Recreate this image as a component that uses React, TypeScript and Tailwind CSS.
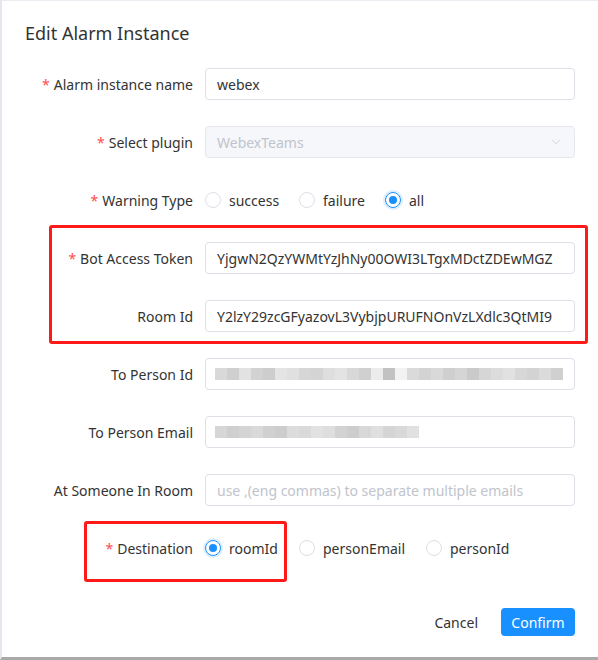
import { ChevronDown } from "lucide-react";

const font = { fontFamily: '"Noto Sans", "Liberation Sans", sans-serif' };

function Label({ text, required }: { text: string; required?: boolean }) {
  return (
    <div className="w-[193px] shrink-0 text-right text-[14px] text-[#333333] pr-0">
      {required && <span className="text-[#ff4d4f] mr-[4px]">*</span>}
      {text}
    </div>
  );
}

function Row({ children }: { children: React.ReactNode }) {
  return <div className="flex items-center h-[32px] gap-[12px]">{children}</div>;
}

function TextBox({ value, placeholder }: { value?: string; placeholder?: string }) {
  return (
    <div className="w-[370px] h-[32px] border border-[#dcdfe6] rounded-[4px] bg-white flex items-center px-[11px] overflow-hidden whitespace-nowrap text-[14px]">
      {value ? <span className="text-[#333333]">{value}</span> : <span className="text-[#c0c4cc]">{placeholder}</span>}
    </div>
  );
}

const idBlocks = ["#d9d9d9", "#cfcfcf", "#e2e2e2", "#d2d2d2", "#cdcdcd", "#e4e4e4", "#e0e0e0", "#d6d6d6", "#d4d4d4", "#dedede", "#e3e3e3", "#d8d8d8", "#d0d0d0", "#ececec", "#c2c2c2", "#f2f2f2", "#dadada", "#d3d3d3", "#d9d9d9", "#cfcfcf", "#d5d5d5", "#cacaca", "#d6d6d6", "#dcdcdc", "#e1e1e1", "#d7d7d7", "#d3d3d3", "#dbdbdb", "#d0d0d0"];
const emailBlocks = ["#d6d6d6", "#cfcfcf", "#d4d4d4", "#dadada", "#d0d0d0", "#cdcdcd", "#dcdcdc", "#d9d9d9", "#e2e2e2", "#dedede", "#d3d3d3", "#cdcdcd", "#d8d8d8", "#dfdfdf", "#d5d5d5", "#d9d9d9", "#e1e1e1"];

function Blurred({ blocks }: { blocks: string[] }) {
  return (
    <div className="w-[370px] h-[32px] border border-[#dcdfe6] rounded-[4px] bg-white flex items-center px-[9px]">
      <div className="flex h-[12px]">
        {blocks.map((c, i) => (
          <div key={i} className="w-[12px] h-[12px]" style={{ background: c }} />
        ))}
      </div>
    </div>
  );
}

function Radio({ label, checked, w }: { label: string; checked?: boolean; w: string }) {
  return (
    <div className={`flex items-center text-[14px] text-[#333333] ${w}`}>
      {checked ? (
        <span className="w-[16px] h-[16px] rounded-full border border-[#1890ff] flex items-center justify-center shadow-[0_0_0_2px_rgba(24,144,255,0.15)]">
          <span className="w-[8px] h-[8px] rounded-full bg-[#1890ff]" />
        </span>
      ) : (
        <span className="w-[16px] h-[16px] rounded-full border border-[#dcdfe6] bg-white" />
      )}
      <span className="ml-[8px]">{label}</span>
    </div>
  );
}

export default function App() {
  return (
    <div style={font} className="relative w-[598px] h-[660px] bg-white border-l-2 border-t border-l-[#e6e6ee] border-t-[#ececf2] border-b-[3px] border-b-[#a9a9a9] box-border overflow-hidden">
      <div className="pt-[19px] pl-[23px] text-[18px] leading-[26px] text-[#333333]">Edit Alarm Instance</div>
      <div className="mt-[22px] flex flex-col gap-[26px] -ml-[2px]">
        <Row>
          <Label text="Alarm instance name" required />
          <TextBox value="webex" />
        </Row>
        <Row>
          <Label text="Select plugin" required />
          <div className="w-[370px] h-[32px] border border-[#e4e7ed] rounded-[4px] bg-[#f5f7fa] flex items-center justify-between px-[11px] text-[14px] text-[#c0c4cc]">
            <span>WebexTeams</span>
            <ChevronDown size={14} strokeWidth={1.2} className="text-[#c0c4cc]" />
          </div>
        </Row>
        <Row>
          <Label text="Warning Type" required />
          <div className="flex items-center">
            <Radio label="success" w="w-[94px]" />
            <Radio label="failure" w="w-[86px]" />
            <Radio label="all" checked w="w-[60px]" />
          </div>
        </Row>
        <Row>
          <Label text="Bot Access Token" required />
          <TextBox value="YjgwN2QzYWMtYzJhNy00OWI3LTgxMDctZDEwMGZ" />
        </Row>
        <Row>
          <Label text="Room Id" />
          <TextBox value="Y2lzY29zcGFyazovL3VybjpURUFNOnVzLXdlc3QtMI9" />
        </Row>
        <Row>
          <Label text="To Person Id" />
          <Blurred blocks={idBlocks} />
        </Row>
        <Row>
          <Label text="To Person Email" />
          <Blurred blocks={emailBlocks} />
        </Row>
        <Row>
          <Label text="At Someone In Room" />
          <TextBox placeholder="use ,(eng commas) to separate multiple emails" />
        </Row>
        <Row>
          <Label text="Destination" required />
          <div className="flex items-center">
            <Radio label="roomId" checked w="w-[94px]" />
            <Radio label="personEmail" w="w-[127px]" />
            <Radio label="personId" w="w-[100px]" />
          </div>
        </Row>
      </div>
      <div className="mt-[44px] flex justify-end items-center pr-[23px] text-[14px]">
        <span className="text-[#333333] mr-[23px]">Cancel</span>
        <span className="h-[28px] w-[74px] rounded-[4px] bg-[#1890ff] text-white flex items-center justify-center">Confirm</span>
      </div>
      <div className="absolute left-[47px] top-[224px] w-[539px] h-[119px] border-[3px] border-[#ff1a1a] rounded-[3px]" />
      <div className="absolute left-[82px] top-[520px] w-[203px] h-[61px] border-[3px] border-[#ff1a1a] rounded-[3px]" />
    </div>
  );
}
